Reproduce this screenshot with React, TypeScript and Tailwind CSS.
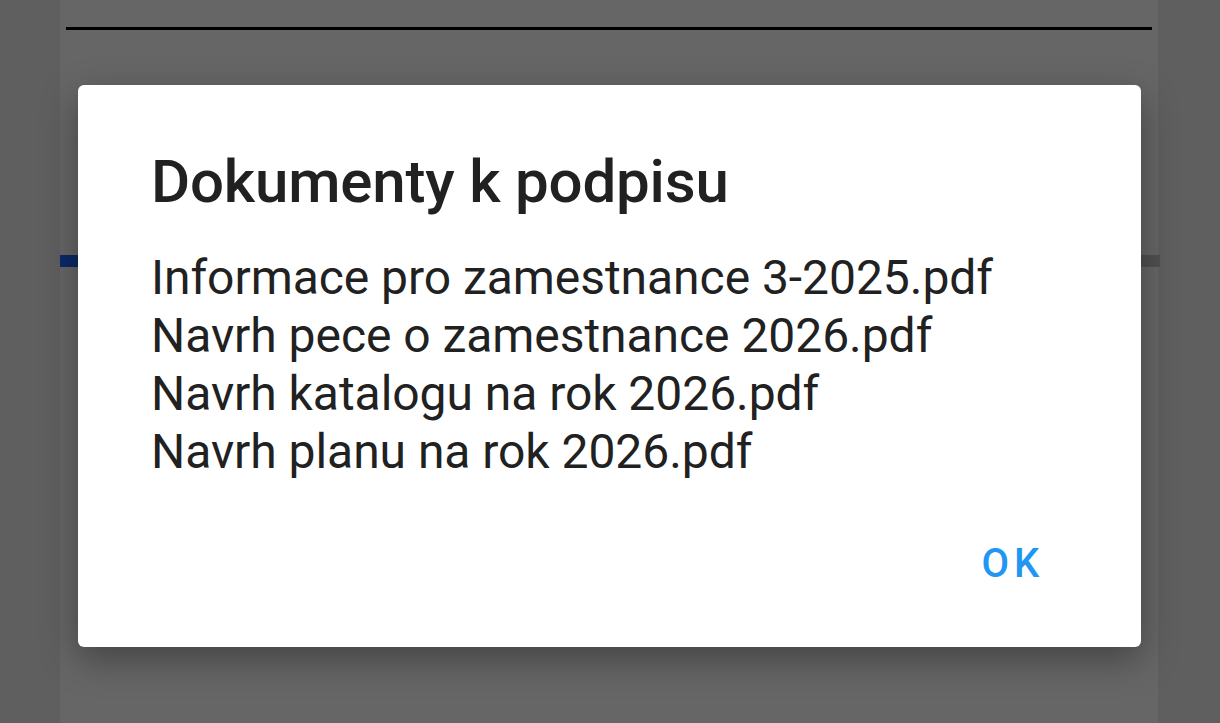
const files = [
  "Informace pro zamestnance 3-2025.pdf",
  "Navrh pece o zamestnance 2026.pdf",
  "Navrh katalogu na rok 2026.pdf",
  "Navrh planu na rok 2026.pdf",
];

export default function App() {
  return (
    <div
      className="relative h-[723px] w-full overflow-hidden bg-[#5f5f5f]"
      style={{ fontFamily: "Roboto, 'Noto Sans', sans-serif" }}
    >
      {/* dimmed page behind the dialog */}
      <div className="ml-[60px] mr-[62px] h-full bg-[#666666]">
        <div className="pt-[27px] px-[6px]">
          <div className="h-[3px] bg-black" />
        </div>
        <div className="mt-[225px] flex h-[12px] -mr-[2px]">
          <div className="w-[60px] bg-[#0a2a66]" />
          <div className="flex-1 bg-[#505050]" />
        </div>
      </div>

      {/* dialog */}
      <div className="absolute left-[78px] top-[85px] flex h-[562px] w-[1063px] flex-col rounded-[6px] bg-white pl-[73px] pr-[97px] pt-[61px] pb-[61px] shadow-[0_12px_36px_rgba(0,0,0,0.35)]">
        <h1 className="text-[60px] leading-[72px] font-medium tracking-[-0.003em] text-[#212121]">
          Dokumenty k podpisu
        </h1>
        <div className="mt-[31px] flex flex-col">
          {files.map((f) => (
            <p key={f} className="text-[48px] leading-[58px] tracking-[-0.001em] text-[#212121]">
              {f}
            </p>
          ))}
        </div>
        <div className="mt-auto flex justify-end">
          <button className="text-[40px] leading-[44px] font-medium tracking-[0.12em] text-[#2196f3]">
            OK
          </button>
        </div>
      </div>
    </div>
  );
}
